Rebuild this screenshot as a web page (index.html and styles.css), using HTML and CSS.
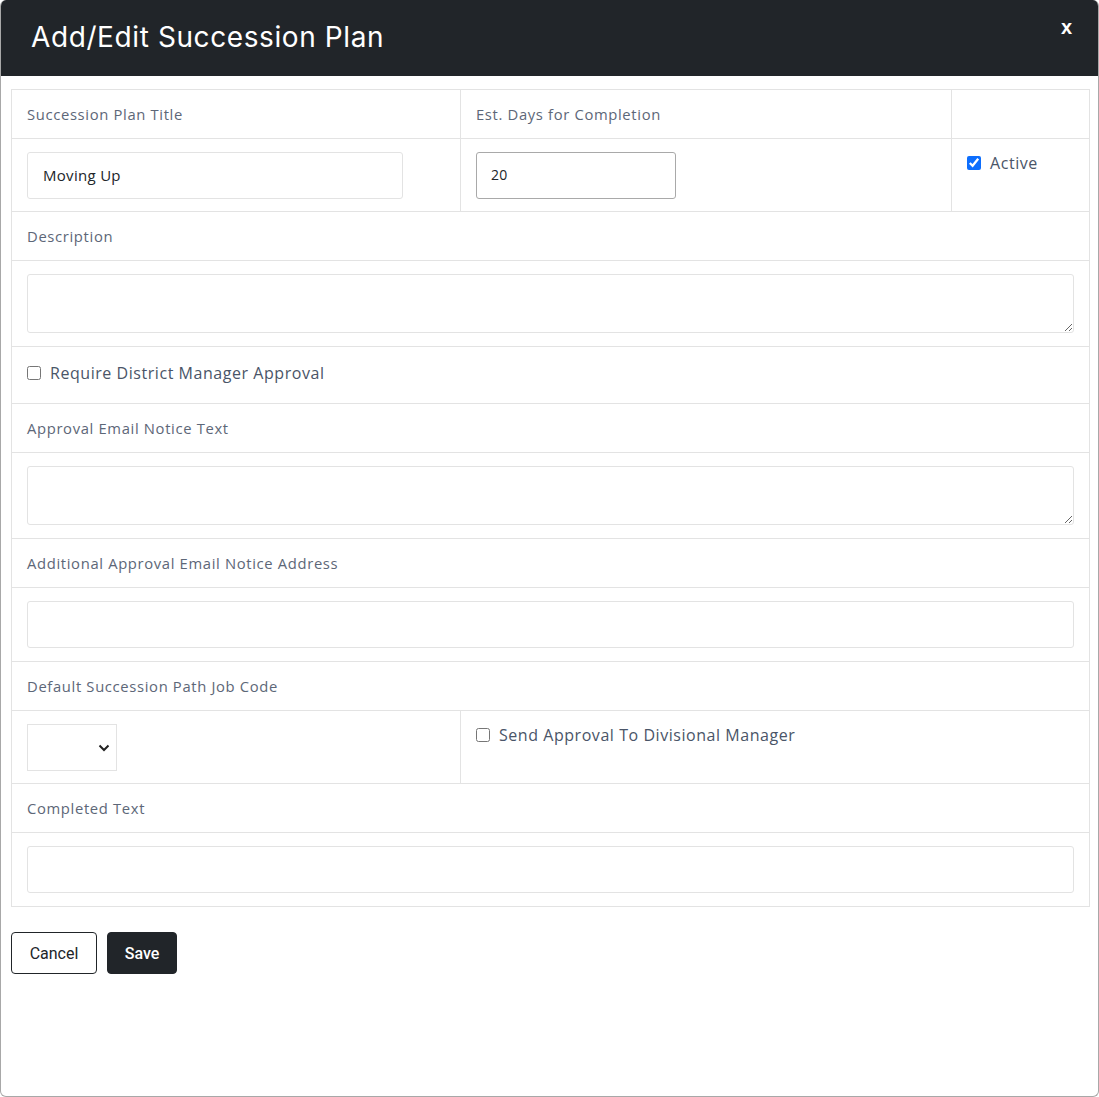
FILE: index.html
```html
<!DOCTYPE html>
<html>
<head>
<meta charset="utf-8">
<link rel="stylesheet" href="styles.css">
</head>
<body>
<div class="modal">
  <div class="modal-header">
    <h1 class="modal-title">Add/Edit Succession Plan</h1>
    <span class="close">x</span>
  </div>
  <div class="modal-body">
    <table class="form-table">
      <colgroup><col class="c1"><col class="c2"><col class="c3"></colgroup>
      <tr class="lbl"><td>Succession Plan Title</td><td>Est. Days for Completion</td><td></td></tr>
      <tr class="inp">
        <td><input class="field title-field" type="text" value="Moving Up"></td>
        <td><input class="field days-field" type="text" value="20"></td>
        <td class="top"><label class="check"><input type="checkbox" checked> <span>Active</span></label></td>
      </tr>
      <tr class="lbl"><td colspan="3">Description</td></tr>
      <tr class="inp tall"><td colspan="3"><textarea class="area"></textarea></td></tr>
      <tr class="chk"><td colspan="3"><label class="check"><input type="checkbox"> <span>Require District Manager Approval</span></label></td></tr>
      <tr class="lbl"><td colspan="3">Approval Email Notice Text</td></tr>
      <tr class="inp tall"><td colspan="3"><textarea class="area"></textarea></td></tr>
      <tr class="lbl"><td colspan="3">Additional Approval Email Notice Address</td></tr>
      <tr class="inp tall"><td colspan="3"><input class="field wide" type="text"></td></tr>
      <tr class="lbl"><td colspan="3">Default Succession Path Job Code</td></tr>
      <tr class="inp">
        <td><div class="select"><svg width="12" height="8" viewBox="0 0 12 8"><path d="M1.5 1.5 L6 6 L10.5 1.5" fill="none" stroke="#222" stroke-width="2"/></svg></div></td>
        <td colspan="2" class="top"><label class="check"><input type="checkbox"> <span>Send Approval To Divisional Manager</span></label></td>
      </tr>
      <tr class="lbl"><td colspan="3">Completed Text</td></tr>
      <tr class="inp tall"><td colspan="3"><input class="field wide" type="text"></td></tr>
    </table>
    <div class="actions">
      <button class="btn btn-cancel">Cancel</button>
      <button class="btn btn-save">Save</button>
    </div>
  </div>
</div>
</body>
</html>
```
FILE: styles.css
```css
html, body { margin: 0; padding: 0; background: #fff; }
body { width: 1099px; height: 1097px; overflow: hidden; }
.modal {
  box-sizing: border-box;
  width: 1099px;
  height: 1097px;
  border: 1px solid #a8a8a8;
  border-top: none;
  border-radius: 6px;
  overflow: hidden;
  background: #fff;
}
.modal-header {
  background: #212529;
  height: 76px;
  display: flex;
  align-items: flex-start;
  justify-content: space-between;
  padding: 0 26px 0 30px;
  box-sizing: border-box;
}
.modal-title {
  margin: 0;
  padding-top: 20px;
  font-family: Inter, "Liberation Sans", sans-serif;
  font-weight: 400;
  font-size: 28px;
  line-height: 34px;
  color: #fff;
  letter-spacing: 0.6px;
}
.close {
  font-family: "Liberation Sans", Arial, sans-serif;
  font-weight: 700;
  font-size: 20px;
  color: #fff;
  padding-top: 16px;
}
.modal-body { padding: 13px 9px 0 10px; }
.form-table {
  width: 1078px;
  border-collapse: collapse;
  table-layout: fixed;
  font-family: "Open Sans", sans-serif;
}
.c1 { width: 449px; }
.c2 { width: 491px; }
.c3 { width: 138px; }
.form-table td {
  border: 1px solid #e3e3e3;
  padding: 0 15px;
  vertical-align: middle;
}
.lbl td {
  height: 47px;
  padding-bottom: 1px;
  font-size: 14.8px;
  color: #5d6778;
  letter-spacing: 0.65px;
}
.inp td { padding-top: 13px; padding-bottom: 12px; }
.inp.tall td { padding-bottom: 13px; }
.inp td.top { vertical-align: top; padding-top: 13px; }
.chk td { height: 52px; padding-bottom: 4px; }
.field {
  box-sizing: border-box;
  display: block;
  height: 47px;
  border: 1px solid #e3e3e3;
  border-radius: 3px;
  padding: 0 15px 2px;
  font-family: "Open Sans", sans-serif;
  font-size: 15px;
  letter-spacing: 0.3px;
  color: #212529;
  outline: none;
}
.title-field { width: 376px; }
.days-field { width: 200px; border-color: #a9a9a9; padding-left: 14px; font-size: 14px; }
.wide { width: 100%; height: 47px; }
.area {
  box-sizing: border-box;
  display: block;
  width: 100%;
  height: 59px;
  border: 1px solid #e3e3e3;
  border-radius: 3px;
  margin: 0;
  resize: vertical;
}
.check {
  display: flex;
  align-items: center;
  gap: 9px;
  font-size: 16px;
  color: #4a5568;
  letter-spacing: 0.55px;
}
.check input { margin: 0; width: 14px; height: 14px; accent-color: #0d6efd; }
.select {
  box-sizing: border-box;
  width: 90px;
  height: 47px;
  border: 1px solid #e3e3e3;
  display: flex;
  align-items: center;
  justify-content: flex-end;
  padding-right: 6px;
}
.actions { display: flex; gap: 10px; margin-top: 25px; }
.btn {
  box-sizing: border-box;
  height: 42px;
  border-radius: 4px;
  font-family: Roboto, "Liberation Sans", sans-serif;
  font-size: 16px;
  padding: 0 15px;
  cursor: pointer;
}
.btn-cancel { width: 86px; background: #fff; border: 1px solid #212529; color: #212529; }
.btn-save { width: 70px; background: #212529; border: 1px solid #212529; color: #fff; font-weight: 500; }
```
